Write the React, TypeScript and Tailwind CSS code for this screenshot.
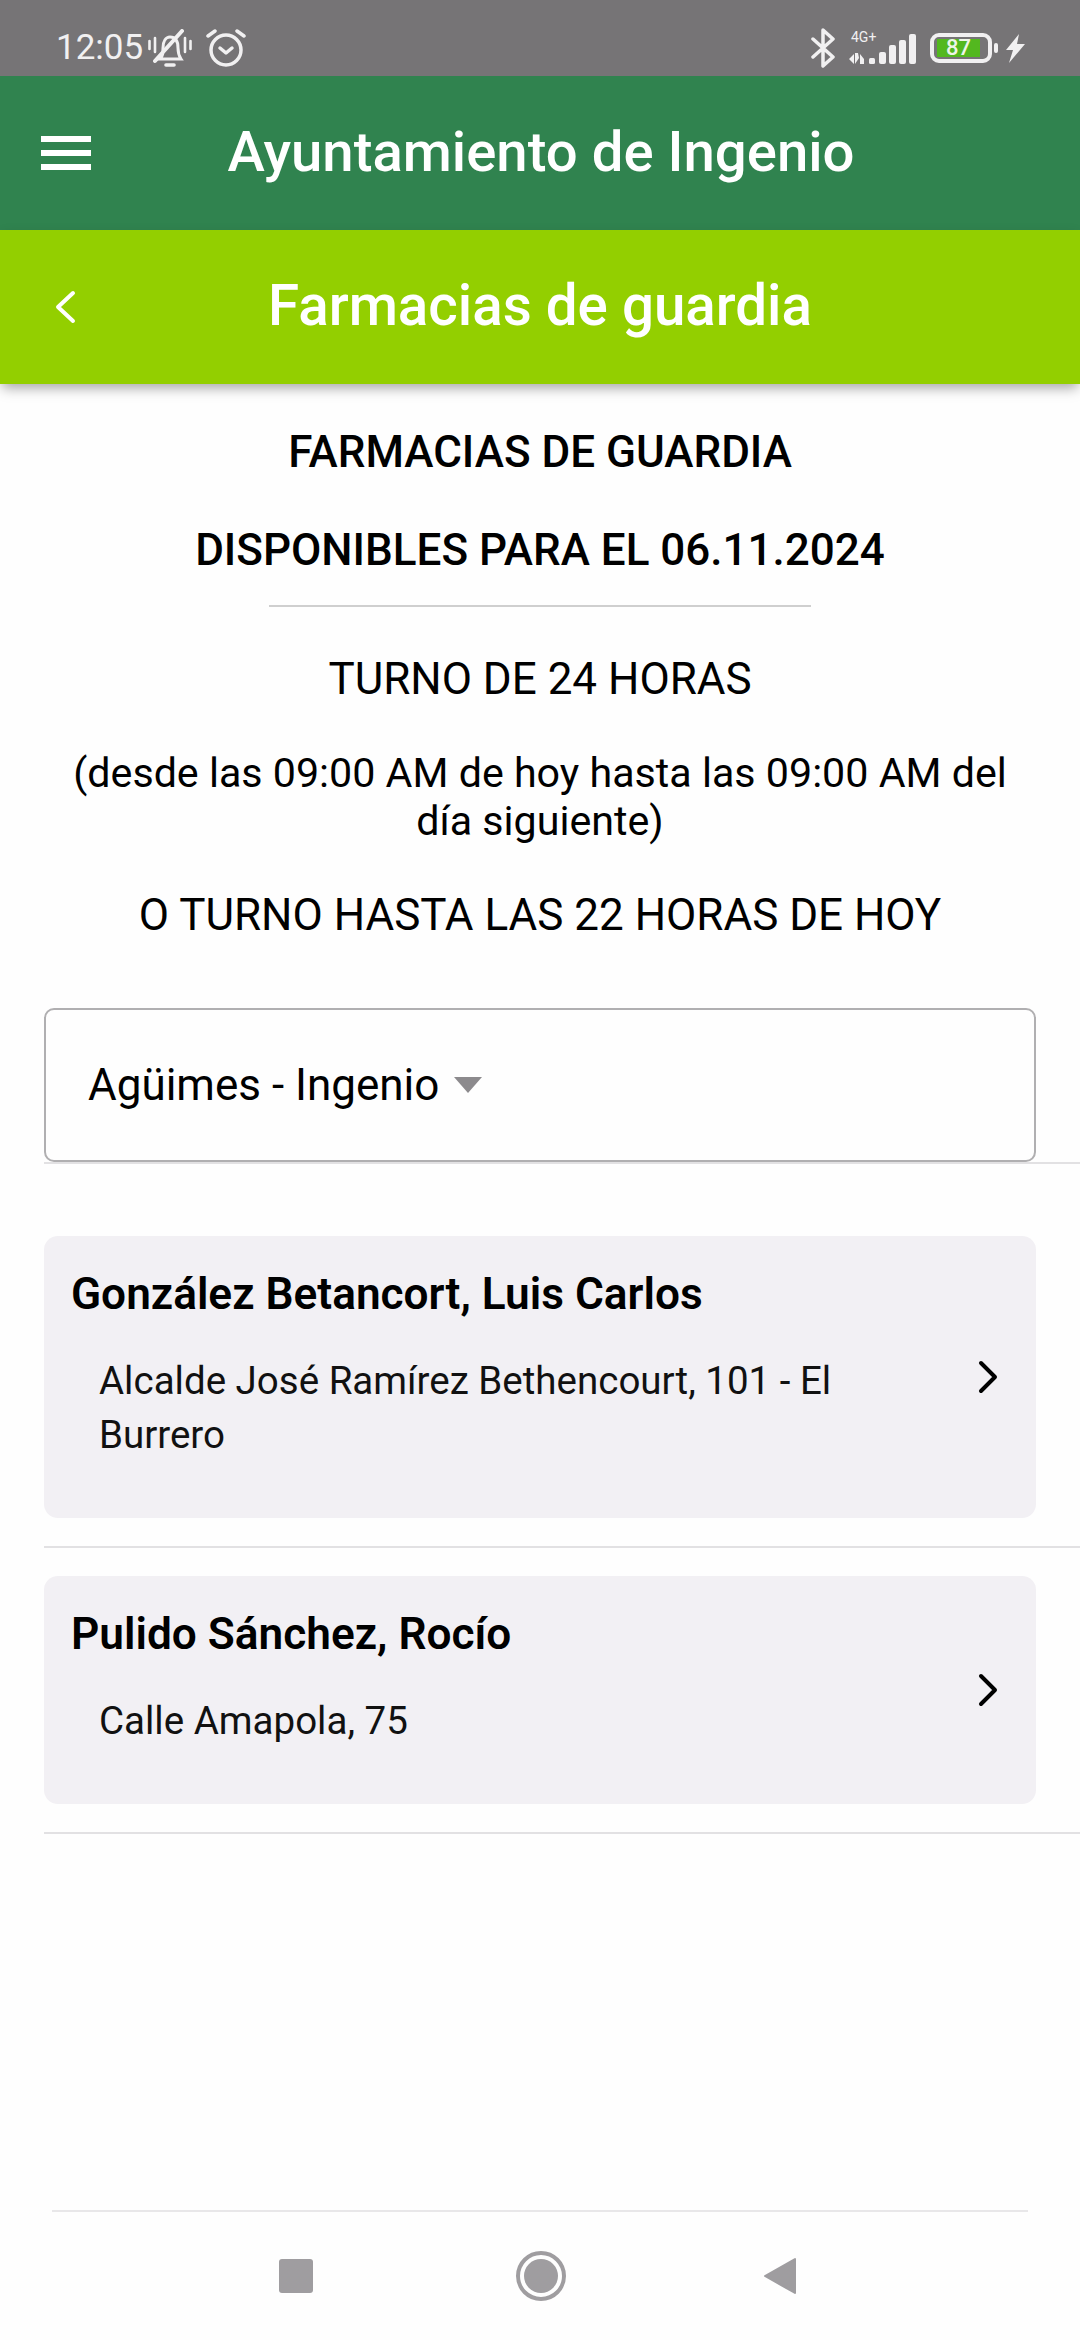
import React from "react";

function StatusBar() {
  return (
    <div className="flex h-[76px] items-center justify-between bg-[#767476] pl-[56px] pr-[55px] pt-[20px] text-[#f1f0f1]">
      <div className="flex items-center">
        <span className="text-[35px] leading-[40px]">12:05</span>
        <svg width="44" height="38" viewBox="0 0 44 38" className="ml-[5px]" fill="none" stroke="currentColor" strokeLinecap="round">
          <path d="M1.5 12v8M7 9v14M37 9v14M42.5 12v8" strokeWidth="2.6" />
          <path d="M12 30c3-3 3-6 3-11 0-7 3-11 7-11 6 0 8 5 8 11 0 5 1 8 3 11z" strokeWidth="3" />
          <path d="M18 36h8" strokeWidth="3.6" />
          <path d="M7 32 34 2" strokeWidth="4" />
        </svg>
        <svg width="40" height="38" viewBox="0 0 40 38" className="ml-[14px]" fill="none" stroke="currentColor" strokeLinecap="round" strokeLinejoin="round">
          <circle cx="20" cy="21" r="15" strokeWidth="3.5" />
          <path d="M14 19l6 5 6-5" strokeWidth="3.5" />
          <path d="M2 7l7-5M38 7l-7-5" strokeWidth="3.5" />
        </svg>
      </div>
      <div className="flex items-center">
        <svg width="24" height="40" viewBox="0 0 24 40" fill="none" stroke="currentColor" strokeWidth="3.5" strokeLinejoin="round" strokeLinecap="round">
          <path d="M2 11l20 18-10 9V2l10 9L2 29" />
        </svg>
        <div className="relative ml-[14px] h-[32px] w-[67px]">
          <span className="absolute left-[2px] top-[-1px] text-[14px] leading-[13px]">4G+</span>
          <svg width="67" height="32" viewBox="0 0 67 32" className="absolute left-0 top-[1px]" fill="currentColor">
            <path d="M0 26l5-5v10zM6 20h3l1 5-4 6zM11 21l4 5v5h-4z" />
            <rect x="20" y="25" width="6" height="6" rx="1.5" />
            <rect x="30" y="19" width="7" height="12" rx="2" />
            <rect x="40" y="12" width="7" height="19" rx="2" />
            <rect x="50" y="7" width="7" height="24" rx="2" />
            <rect x="60" y="1" width="7" height="30" rx="2" />
          </svg>
        </div>
        <div className="ml-[14px] flex h-[30px] w-[62px] items-center rounded-[9px] border-[4px] border-[#f1f0f1] py-[2px] pl-[3px] pr-[8px]">
          <div className="flex h-full w-full items-center justify-center bg-[#53b81f] text-[22px] font-medium leading-none text-[#eef5e8]">87</div>
        </div>
        <div className="ml-[2px] h-[10px] w-[4px] rounded-sm bg-[#f1f0f1]" />
        <svg width="19" height="29" viewBox="0 0 19 29" className="ml-[8px]" fill="currentColor">
          <path d="M13 0 0 16h7L3 29l16-19h-8z" />
        </svg>
      </div>
    </div>
  );
}

function Card({ name, lines }: { name: string; lines: string[] }) {
  return (
    <div className="ml-[44px] border-b-2 border-[#e2e1e3] pb-[28px]">
      <div className="mr-[44px] flex items-center rounded-[14px] bg-[#f2f0f4] pb-[56px] pl-[27px] pr-[38px] pt-[36px]">
        <div className="flex-1">
          <div className="text-[44.2px] font-semibold leading-[44px] text-black">{name}</div>
          <div className="mt-[38px] pl-[28px] text-[38.5px] leading-[54px] text-[#111]">
            {lines.map((l) => (
              <div key={l}>{l}</div>
            ))}
          </div>
        </div>
        <svg width="20" height="34" viewBox="0 0 20 34" className="mt-[20px]" fill="none" stroke="#000" strokeWidth="4" strokeLinecap="round" strokeLinejoin="round">
          <path d="M3 3l14 14L3 31" />
        </svg>
      </div>
    </div>
  );
}

export default function App() {
  return (
    <div className="flex h-[2340px] w-[1080px] flex-col overflow-hidden bg-[#fefefe] text-black" style={{ fontFamily: "Roboto, sans-serif" }}>
      <StatusBar />
      <header className="relative flex h-[154px] items-center justify-center bg-[#30834f]">
        <div className="absolute left-[41px] flex h-[34px] w-[50px] flex-col justify-between">
          <div className="h-[6px] bg-white" />
          <div className="h-[6px] bg-white" />
          <div className="h-[6px] bg-white" />
        </div>
        <h1 className="pb-[2px] pl-[2px] text-[56.3px] font-medium leading-none text-white">Ayuntamiento de Ingenio</h1>
      </header>
      <div className="relative z-10 flex h-[154px] items-center justify-center bg-[#93cf00] shadow-[0_6px_12px_-2px_rgba(0,0,0,0.35)]">
        <svg width="24" height="38" viewBox="0 0 24 38" className="absolute left-[53px]" fill="none" stroke="#fff" strokeWidth="4" strokeLinecap="round" strokeLinejoin="round">
          <path d="M20 5 5 19l15 14" />
        </svg>
        <h2 className="pb-[1px] text-[56.5px] font-medium leading-none text-white">Farmacias de guardia</h2>
      </div>

      <main className="flex flex-1 flex-col">
        <div className="px-[44px] pt-[46px] text-center">
          <p className="text-[44px] font-medium leading-[44px]">FARMACIAS DE GUARDIA</p>
          <p className="mt-[54px] text-[44px] font-medium leading-[44px]">DISPONIBLES PARA EL 06.11.2024</p>
          <div className="mx-auto mt-[33px] h-[2px] w-[542px] bg-[#cfcfcf]" />
          <p className="mt-[50px] text-[44px] leading-[44px]">TURNO DE 24 HORAS</p>
          <p className="mt-[48px] text-[41.2px] leading-[48px]">
            (desde las 09:00 AM de hoy hasta las 09:00 AM del
            <br />
            día siguiente)
          </p>
          <p className="mt-[46px] text-[44px] leading-[48px]">O TURNO HASTA LAS 22 HORAS DE HOY</p>
        </div>

        <div className="ml-[44px] mt-[69px] border-b-2 border-[#e2e1e3]">
          <div className="mr-[44px] flex h-[154px] items-center rounded-[10px] border-2 border-[#b0afb1] pl-[42px]">
            <span className="text-[44px] leading-none">Agüimes - Ingenio</span>
            <span className="ml-[15px] h-0 w-0 border-x-[14px] border-t-[16px] border-x-transparent border-t-[#8c8a8d]" />
          </div>
        </div>

        <div className="mt-[72px] flex flex-col gap-[28px]">
          <Card name="González Betancort, Luis Carlos" lines={["Alcalde José Ramírez Bethencourt, 101 - El", "Burrero"]} />
          <Card name="Pulido Sánchez, Rocío" lines={["Calle Amapola, 75"]} />
        </div>

        <nav className="mx-[52px] mt-auto flex h-[130px] items-center justify-between border-t-2 border-[#e8e7e9] pl-[227px] pr-[231px]">
          <div className="h-[34px] w-[34px] rounded-[3px] bg-[#9f9da0]" />
          <div className="ml-[6px] flex h-[50px] w-[50px] items-center justify-center rounded-full border-[4px] border-[#9f9da0]">
            <div className="h-[34px] w-[34px] rounded-full bg-[#9f9da0]" />
          </div>
          <svg width="34" height="38" viewBox="0 0 34 38" fill="#9f9da0">
            <path d="M32 2v34L2 19z" stroke="#9f9da0" strokeWidth="2" strokeLinejoin="round" />
          </svg>
        </nav>
      </main>
    </div>
  );
}
